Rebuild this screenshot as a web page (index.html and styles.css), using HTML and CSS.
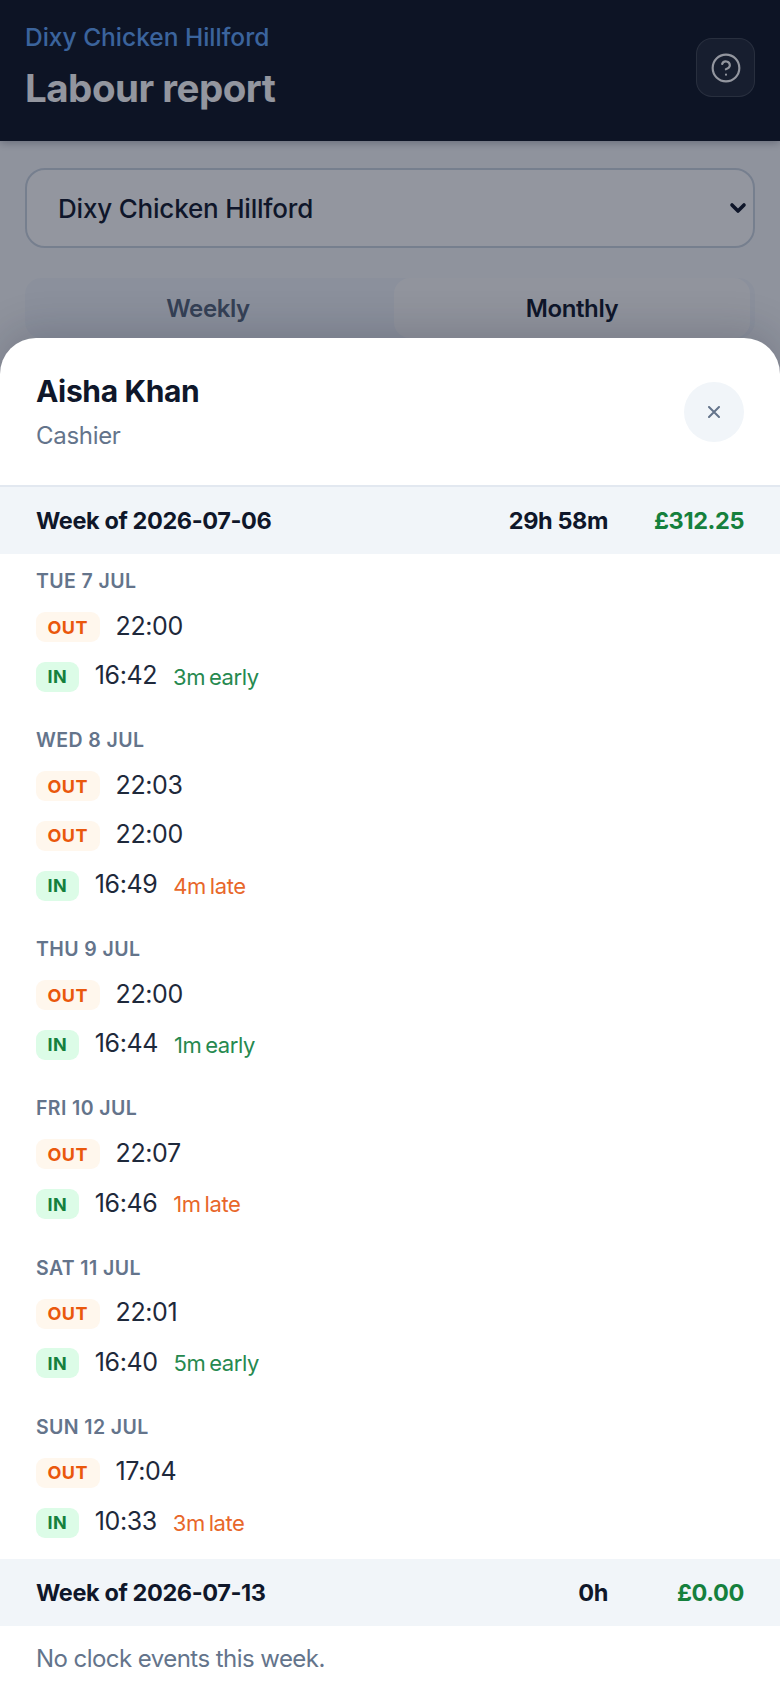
FILE: index.html
```html
<!DOCTYPE html>
<html lang="en">
  <head>
    <meta charset="UTF-8" />
    <meta name="viewport" content="width=device-width, initial-scale=1.0" />
    <title>Labour report</title>
    <link rel="stylesheet" href="styles.css">
  </head>
  <body>
    <div class="page">
      <header class="topbar">
        <div>
          <div class="store-name">Dixy Chicken Hillford</div>
          <h1>Labour report</h1>
        </div>
        <button class="help-btn" type="button" aria-label="Help">
          <svg width="32" height="32" viewBox="0 0 24 24" fill="none" stroke="currentColor" stroke-width="1.6" stroke-linecap="round" stroke-linejoin="round">
            <circle cx="12" cy="12" r="10"></circle>
            <path d="M9.1 9a3 3 0 0 1 5.8 1c0 2-3 3-3 3"></path>
            <path d="M12 17h.01"></path>
          </svg>
        </button>
      </header>

      <main class="content">
        <div class="select-box">
          <span>Dixy Chicken Hillford</span>
          <svg width="18" height="12" viewBox="0 0 18 12" fill="none" stroke="currentColor" stroke-width="3.6" stroke-linecap="round" stroke-linejoin="round">
            <path d="M3 3l6 6 6-6"></path>
          </svg>
        </div>
        <div class="tabs">
          <div class="tab">Weekly</div>
          <div class="tab active">Monthly</div>
        </div>
      </main>

      <div class="backdrop"></div>

      <section class="sheet">
        <div class="sheet-head">
          <div>
            <h2>Aisha Khan</h2>
            <div class="role">Cashier</div>
          </div>
          <button class="close-btn" type="button" aria-label="Close">
            <svg width="12" height="12" viewBox="0 0 12 12" fill="none" stroke="currentColor" stroke-width="2" stroke-linecap="round">
              <path d="M1 1l10 10M11 1L1 11"></path>
            </svg>
          </button>
        </div>

        <div class="week-row">
          <span class="week-name">Week of 2026-07-06</span>
          <span class="week-hours">29h 58m</span>
          <span class="week-pay">£312.25</span>
        </div>

        <div class="day">
          <div class="day-label">TUE 7 JUL</div>
          <div class="event"><span class="badge out">OUT</span><span class="time">22:00</span></div>
          <div class="event"><span class="badge in">IN</span><span class="time">16:42</span><span class="note early">3m early</span></div>
        </div>

        <div class="day">
          <div class="day-label">WED 8 JUL</div>
          <div class="event"><span class="badge out">OUT</span><span class="time">22:03</span></div>
          <div class="event"><span class="badge out">OUT</span><span class="time">22:00</span></div>
          <div class="event"><span class="badge in">IN</span><span class="time">16:49</span><span class="note late">4m late</span></div>
        </div>

        <div class="day">
          <div class="day-label">THU 9 JUL</div>
          <div class="event"><span class="badge out">OUT</span><span class="time">22:00</span></div>
          <div class="event"><span class="badge in">IN</span><span class="time">16:44</span><span class="note early">1m early</span></div>
        </div>

        <div class="day">
          <div class="day-label">FRI 10 JUL</div>
          <div class="event"><span class="badge out">OUT</span><span class="time">22:07</span></div>
          <div class="event"><span class="badge in">IN</span><span class="time">16:46</span><span class="note late">1m late</span></div>
        </div>

        <div class="day">
          <div class="day-label">SAT 11 JUL</div>
          <div class="event"><span class="badge out">OUT</span><span class="time">22:01</span></div>
          <div class="event"><span class="badge in">IN</span><span class="time">16:40</span><span class="note early">5m early</span></div>
        </div>

        <div class="day">
          <div class="day-label">SUN 12 JUL</div>
          <div class="event"><span class="badge out">OUT</span><span class="time">17:04</span></div>
          <div class="event"><span class="badge in">IN</span><span class="time">10:33</span><span class="note late">3m late</span></div>
        </div>

        <div class="week-row">
          <span class="week-name">Week of 2026-07-13</span>
          <span class="week-hours">0h</span>
          <span class="week-pay">£0.00</span>
        </div>

        <p class="empty">No clock events this week.</p>
      </section>
    </div>
  </body>
</html>
```

FILE: styles.css
```css
* {
  box-sizing: border-box;
}
html,
body {
  margin: 0;
  height: 100%;
}
body {
  font-family: Inter, "Noto Sans", sans-serif;
  color: #0f172a;
  background: #f8fafc;
}
button {
  font-family: inherit;
  border: none;
}
.page {
  position: relative;
  height: 1688px;
  overflow: hidden;
  background: #f8fafc;
}
.topbar {
  height: 141px;
  padding: 20px 25px 0;
  display: flex;
  justify-content: space-between;
  background: #0b1322;
  box-shadow: 0 2px 8px rgba(15, 23, 42, 0.3);
  color: #fff;
}
.store-name {
  font-size: 24.5px;
  line-height: 34px;
  font-weight: 500;
  color: #60a5fa;
}
h1 {
  margin: 11px 0 0;
  font-size: 38.5px;
  line-height: 46px;
  font-weight: 700;
  letter-spacing: -0.5px;
}
.help-btn {
  width: 59px;
  height: 59px;
  margin-top: 18px;
  border: 1px solid rgba(255, 255, 255, 0.14);
  border-radius: 16px;
  background: rgba(255, 255, 255, 0.08);
  color: #fff;
  display: flex;
  align-items: center;
  justify-content: center;
  padding: 0;
}
.content {
  padding: 27px 25px 0;
}
.select-box {
  height: 80px;
  padding: 0 6px 0 31px;
  display: flex;
  align-items: center;
  justify-content: space-between;
  border: 2px solid #cbd5e1;
  border-radius: 20px;
  background: #fff;
  font-size: 26px;
  font-weight: 500;
  letter-spacing: -0.2px;
}
.tabs {
  margin-top: 30px;
  padding: 0 5px;
  height: 60px;
  display: grid;
  grid-template-columns: 1fr 1fr;
  gap: 8px;
  border-radius: 16px;
  background: #f1f5f9;
}
.tab {
  display: flex;
  align-items: center;
  justify-content: center;
  border-radius: 16px;
  font-size: 24px;
  font-weight: 600;
  letter-spacing: -0.4px;
  color: #55647a;
}
.tab.active {
  background: #fbfbfc;
  color: #0f172a;
}
.backdrop {
  position: absolute;
  inset: 0;
  background: rgba(15, 23, 42, 0.45);
}
.sheet {
  position: absolute;
  left: 0;
  right: 0;
  top: 338px;
  bottom: 0;
  background: #fff;
  border-radius: 36px 36px 0 0;
  box-shadow: 0 -8px 40px rgba(15, 23, 42, 0.18);
  overflow: hidden;
}
.sheet-head {
  height: 149px;
  padding: 35px 36px 0;
  display: flex;
  justify-content: space-between;
  align-items: flex-start;
  border-bottom: 2px solid #e2e8f0;
}
h2 {
  margin: 0;
  font-size: 30px;
  line-height: 36px;
  font-weight: 700;
  letter-spacing: -0.35px;
}
.role {
  margin-top: 12px;
  font-size: 24px;
  line-height: 30px;
  letter-spacing: -0.3px;
  color: #64748b;
}
.close-btn {
  width: 60px;
  height: 60px;
  margin-top: 9px;
  padding: 0;
  border-radius: 50%;
  background: #f1f5f9;
  color: #64748b;
  display: flex;
  align-items: center;
  justify-content: center;
}
.week-row {
  height: 67px;
  padding: 0 36px;
  display: flex;
  align-items: center;
  background: #f1f5f9;
  font-size: 23.5px;
  font-weight: 700;
  letter-spacing: -0.4px;
}
.week-name {
  flex: 1;
}
.week-pay {
  width: 136px;
  text-align: right;
  color: #15803d;
}
.day {
  padding: 14px 36px 21.4px;
  display: flex;
  flex-direction: column;
  gap: 19.8px;
}
.day-label {
  height: 26px;
  line-height: 26px;
  margin-bottom: -1.8px;
  font-size: 19.5px;
  font-weight: 600;
  letter-spacing: 0.4px;
  color: #64748b;
}
.event {
  height: 30px;
  display: flex;
  align-items: center;
  gap: 16px;
}
.badge {
  height: 30px;
  padding: 0 11.5px;
  display: flex;
  align-items: center;
  border-radius: 9px;
  font-size: 18px;
  font-weight: 700;
  letter-spacing: 0.5px;
}
.badge.out {
  background: #fff7ed;
  color: #ea580c;
}
.badge.in {
  background: #dcfce7;
  color: #15803d;
}
.time {
  padding-bottom: 3px;
  font-size: 25px;
  font-weight: 400;
  letter-spacing: -0.4px;
  color: #1e293b;
}
.note {
  font-size: 22px;
  font-weight: 400;
  letter-spacing: -0.4px;
  word-spacing: -2px;
}
.note.early {
  color: #26894f;
}
.note.late {
  color: #e8672a;
}
.empty {
  margin: 18px 36px 0;
  font-size: 24px;
  line-height: 30px;
  letter-spacing: -0.55px;
  color: #64748b;
}
```
